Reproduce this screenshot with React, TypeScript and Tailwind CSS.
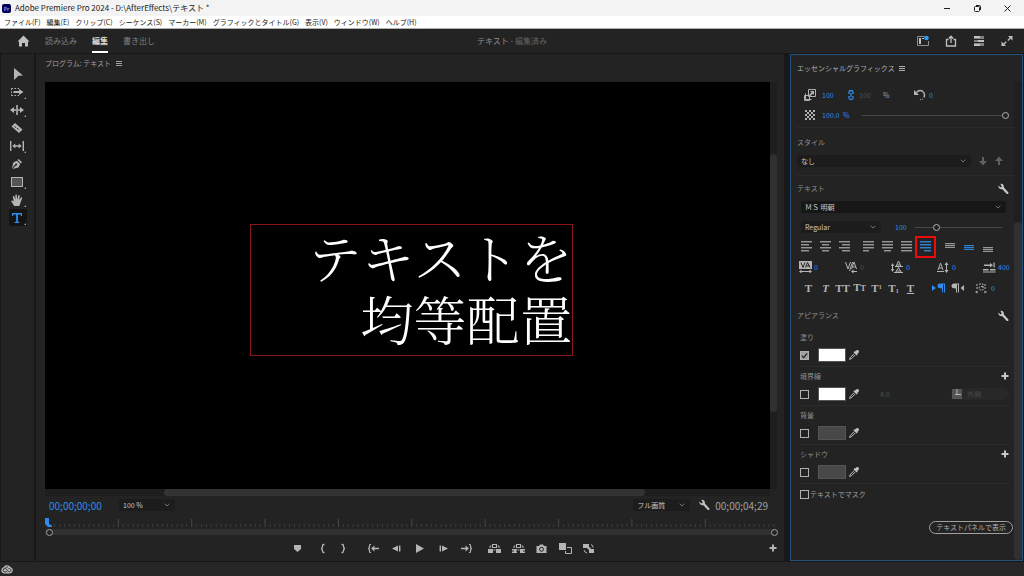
import type { ReactNode } from "react"
import { ChevronDown } from "lucide-react"

const menus = [
  "ファイル(F)",
  "編集(E)",
  "クリップ(C)",
  "シーケンス(S)",
  "マーカー(M)",
  "グラフィックとタイトル(G)",
  "表示(V)",
  "ウィンドウ(W)",
  "ヘルプ(H)",
]

type IconProps = { w?: number; h?: number; children: ReactNode; className?: string }

function Icon({ w = 12, h = 12, children, className = "" }: IconProps) {
  return (
    <svg
      width={w}
      height={h}
      viewBox={`0 0 ${w} ${h}`}
      fill="currentColor"
      className={`block shrink-0 ${className}`}
      aria-hidden="true"
    >
      {children}
    </svg>
  )
}

function Wrench() {
  return (
    <Icon>
      <path d="M1.2 2.6 3.6 4.4 4.8 3.4 3.4.9C5.6.4 7.2 2 6.9 4.4L11.4 9.4Q11.8 10.2 11.2 10.8 10.6 11.3 9.8 10.9L5.4 6.2C3.2 6.8 1.2 5 1.2 2.6Z" />
    </Icon>
  )
}

function Plus() {
  return (
    <Icon w={8} h={8}>
      <path d="M3 .5h2V3h2.5v2H5v2.5H3V5H.5V3H3z" />
    </Icon>
  )
}

function Burger() {
  return (
    <Icon w={6} h={6}>
      <path d="M0 0h6v1H0zM0 2h6v1H0zM0 4h6v1H0z" />
    </Icon>
  )
}

function Dropper() {
  return (
    <Icon>
      <path d="M8 1.6Q9.4.3 10.6 1.4 11.7 2.6 10.4 4L9.2 5.1 9.7 5.7 8.8 6.6 5.4 3.2 6.3 2.3 6.9 2.8z" />
      <path d="M6.2 4.6 2.4 8.4 1.6 10.4 3.6 9.6 7.4 5.8" fill="none" stroke="currentColor" />
    </Icon>
  )
}

function Lines({ rows }: { rows: [number, number][] }) {
  return (
    <Icon w={11} h={12}>
      {rows.map(([x, w], i) => (
        <rect key={i} x={x} y={i * 3} width={w} height={1} />
      ))}
      {rows.map(([x, w], i) => (
        <rect key={`s${i}`} x={x} y={i * 3 + 1} width={w} height={1} opacity={0.45} />
      ))}
    </Icon>
  )
}

function VLines({ top }: { top: number }) {
  return (
    <Icon w={11} h={12}>
      <path d={`M1 ${top}h10v1H1zM1 ${top + 2}h10v1H1zM1 ${top + 4}h10v1H1z`} />
      <path d={`M1 ${top}h10v5H1z`} opacity={0.25} />
    </Icon>
  )
}

const tools: { label: string; corner?: boolean; active?: boolean; icon: ReactNode }[] = [
  { label: "選択ツール", icon: <path d="M4 1 13 8.500 8.500 8.800 4 13z" /> },
  {
    label: "トラックの前方選択ツール",
    corner: true,
    icon: (
      <>
        <path d="M1.5 3.5h8M1.5 10.5h8M1.5 3.5v7" stroke="currentColor" strokeDasharray="1.5 1.5" fill="none" />
        <path d="M3.5 6H9V4L13.5 7 9 10V8H3.5z" />
      </>
    ),
  },
  {
    label: "リップルツール",
    corner: true,
    icon: <path d="M6.2 2h1.6v10H6.2zM0 7l4-3v2.2h2v1.6H4V10zM14 7l-4-3v2.2H8v1.6h2V10z" />,
  },
  {
    label: "レーザーツール",
    icon: (
      <>
        <path d="M5 2 12.5 8.5 9 12 1.5 5.5z" />
        <path d="M4.5 5.5 9.5 9" stroke="#232323" strokeDasharray="2 1" />
      </>
    ),
  },
  {
    label: "スリップツール",
    corner: true,
    icon: <path d="M0 2h1.4v10H0zM12.6 2H14v10h-1.4zM2.3 7l3-2.5v1.8h3.4V4.500l3 2.500-3 2.500V7.700H5.3v1.8z" />,
  },
  {
    label: "ペンツール",
    icon: <path d="M8.6 2 12 5.2 10.8 6.4 7.5 3zM6.8 3.8 10.2 7 8.4 10.6 2.4 12 6 8.4A1 1 0 1 0 5.2 7.6L1.8 11.4 3.4 5.4z" />,
  },
  {
    label: "長方形ツール",
    corner: true,
    icon: <rect x="1.5" y="2.5" width="11" height="9" fill="#555" stroke="currentColor" />,
  },
  {
    label: "手のひらツール",
    corner: true,
    icon: (
      <path d="M4.2 13 1.2 8.2Q1.4 7.2 2.6 7.6L3.8 8.6 2.8 3.4Q3.4 2.4 4.2 3.2L5.4 6.6 5.4 1.8Q6.2 1 6.8 1.8L7.2 6.4 8.4 2.2Q9.2 1.5 9.8 2.4L9.2 7 11 4.4Q12 4 12.2 5L10.2 10.6 9.4 13z" />
    ),
  },
  {
    label: "横書き文字ツール",
    corner: true,
    active: true,
    icon: <path d="M2 2h10v3h-1L10.6 3.4H7.9V10.8L9.4 11v1H4.6v-1L6.1 10.8V3.4H3.4L3 5H2z" />,
  },
]

function Toolbar() {
  return (
    <aside className="flex w-9 shrink-0 flex-col items-center gap-px border-r-2 border-l border-[#181818] bg-[#232323] pt-[11px]">
      {tools.map((t) => (
        <button
          key={t.label}
          aria-label={t.label}
          className={`flex h-[17px] w-[18px] items-center justify-center ${t.active ? "bg-[#141414] text-[#2d8ceb]" : "text-[#b4b4b4]"}`}
        >
          <Icon w={16} h={14}>
            {t.icon}
            {t.corner && <path d="M16 12v2h-2z" fill="#a0a0a0" />}
          </Icon>
        </button>
      ))}
    </aside>
  )
}

const transport: { label: string; gap: string; icon: ReactNode }[] = [
  { label: "マーカーを追加", gap: "", icon: <path d="M3 3h7v4L6.5 10 3 7z" /> },
  {
    label: "インをマーク",
    gap: "ml-[5px]",
    icon: <path d="M8.500 2.500H7.500Q6.500 2.500 6.500 4 6.500 6.500 5 6.500 6.500 6.500 6.500 9 6.500 10.500 7.500 10.500H8.500" fill="none" stroke="currentColor" strokeWidth="1.3" />,
  },
  {
    label: "アウトをマーク",
    gap: "ml-px",
    icon: <path d="M4.500 2.500H5.500Q6.500 2.500 6.500 4 6.500 6.500 8 6.500 6.500 6.500 6.500 9 6.500 10.500 5.500 10.500H4.500" fill="none" stroke="currentColor" strokeWidth="1.3" />,
  },
  {
    label: "インへ移動",
    gap: "ml-[10px]",
    icon: (
      <>
        <path d="M4 2.500H3Q2.500 2.500 2.500 4 2.500 6.500 1 6.500 2.500 6.500 2.500 9 2.500 10.500 3 10.500H4" fill="none" stroke="currentColor" strokeWidth="1.2" />
        <path d="M4 6.500 7.500 3.500v2.200H12v1.600H7.500v2.200z" />
      </>
    ),
  },
  { label: "1 フレーム前へ戻る", gap: "ml-[3px]", icon: <path d="M2 6.500 8 3.500v6zM9 3.500h1.400v6H9z" /> },
  { label: "再生", gap: "ml-[3px]", icon: <path d="M3 2 11 6.500 3 11z" /> },
  { label: "1 フレーム先へ進む", gap: "ml-1", icon: <path d="M11 6.500 5 3.500v6zM2.600 3.500H4v6H2.600z" /> },
  {
    label: "アウトへ移動",
    gap: "ml-[3px]",
    icon: (
      <>
        <path d="M9 2.500h1Q10.500 2.500 10.500 4 10.500 6.500 12 6.500 10.500 6.500 10.500 9 10.500 10.500 10 10.500H9" fill="none" stroke="currentColor" strokeWidth="1.2" />
        <path d="M9 6.500 5.500 3.500v2.200H1v1.600h4.500v2.200z" />
      </>
    ),
  },
  {
    label: "リフト",
    gap: "ml-2",
    icon: (
      <>
        <rect x="0" y="7" width="5" height="4" />
        <rect x="8" y="7" width="5" height="4" />
        <rect x="4.5" y="2.5" width="4" height="3" fill="none" stroke="currentColor" />
        <path d="M2 6V4h1.500M11 6V4H9.500M5.500 8h2" fill="none" stroke="currentColor" />
      </>
    ),
  },
  {
    label: "抽出",
    gap: "ml-1",
    icon: (
      <>
        <path d="M0 7h5v1L4 9l1 1v1H0V9.500h2v-1H0zM13 7H8v4h5V9.500h-2v-1h2z" />
        <rect x="4.5" y="2.5" width="4" height="3" fill="none" stroke="currentColor" />
        <path d="M2 6V4h1.500M11 6V4H9.500M5.500 8h2" fill="none" stroke="currentColor" />
      </>
    ),
  },
  {
    label: "フレームを書き出し",
    gap: "ml-[3px]",
    icon: (
      <>
        <path d="M1.500 4H4l1-1.500h3L9 4h2.500v7h-10z" />
        <circle cx="6.5" cy="7.3" r="2" fill="none" stroke="#232323" />
      </>
    ),
  },
  {
    label: "比較表示",
    gap: "ml-1",
    icon: (
      <>
        <rect x="0" y="1" width="7" height="7" />
        <path d="M8 5.500h4.500v6h-6V9" fill="none" stroke="currentColor" />
      </>
    ),
  },
  {
    label: "プロキシの切り替え",
    gap: "ml-[3px]",
    icon: (
      <>
        <rect x="1" y="2" width="6" height="4" />
        <rect x="7" y="7" width="5" height="4" />
        <path d="M9 2.500q2 .5 2 3M2 8q.5 2.500 3 3" fill="none" stroke="currentColor" />
        <path d="M5 6.500 8.500 9V5z" />
      </>
    ),
  },
]

function Transport() {
  return (
    <div className="flex h-6 items-center pl-[242px] text-[#b4b4b4]">
      {transport.map((t) => (
        <button key={t.label} aria-label={t.label} className={`flex w-5 shrink-0 justify-center ${t.gap}`}>
          <Icon w={13} h={13}>{t.icon}</Icon>
        </button>
      ))}
      <button aria-label="ボタンエディター" className="ml-auto">
        <Plus />
      </button>
    </div>
  )
}

type SelectProps = { label: string; value: string; className?: string; selectClass?: string }

function Select({ label, value, className = "", selectClass = "bg-[#1c1c1c]" }: SelectProps) {
  return (
    <div className={`relative flex items-center ${className}`}>
      <select
        aria-label={label}
        className={`h-3 w-full appearance-none rounded-xs pr-3 pl-1 text-[7px] leading-3 text-[#c8c8c8] ${selectClass}`}
      >
        <option>{value}</option>
      </select>
      <ChevronDown size={8} className="pointer-events-none absolute right-1 text-[#a0a0a0]" />
    </div>
  )
}

function Ruler() {
  const ticks = Array.from({ length: 149 }, (_, i) => i + 1)
  return (
    <div className="relative mr-[2px] h-[19px]">
      <svg width="100%" height="12" className="block" aria-hidden="true">
        {ticks.map((i) => {
          const x = `${i * 0.67}%`
          const major = i % 15 === 0
          return (
            <line key={i} x1={x} x2={x} y1={major ? 2 : 7} y2={10} stroke={major ? "#484848" : "#3c3c3c"} />
          )
        })}
      </svg>
      <div className="h-[6px] bg-[#303030]" />
      <div className="absolute top-px left-0 text-[#2d8ceb]">
        <Icon w={8} h={9}>
          <path d="M0 0h4v6l3 1.500v1.500H3L0 6z" />
        </Icon>
      </div>
      <div className="absolute bottom-0 left-px size-[7px] rounded-full border border-[#a0a0a0] bg-[#232323]" />
      <div className="absolute -right-[3px] bottom-0 size-[7px] rounded-full border border-[#a0a0a0] bg-[#232323]" />
    </div>
  )
}

function ProgramPanel() {
  return (
    <main className="flex min-w-0 flex-1 flex-col bg-[#232323] pr-[7px] pl-[9px]">
      <div className="flex h-[19px] items-center gap-[5px] text-[7px] text-[#a0a0a0]">
        <h2>プログラム: テキスト</h2>
        <Burger />
      </div>

      <div className="mt-[9px] flex flex-1">
        <div className="flex flex-1 items-center justify-center bg-black pt-2 pl-2">
          <div className="border border-[#8c1518] pb-[6px] pl-[58px] text-right font-['Noto_Serif_CJK_JP','Noto_Sans_CJK_JP',serif] text-[53px] leading-[62px] font-light text-white">
            <p>テキストを</p>
            <p>均等配置</p>
          </div>
        </div>
        <div className="flex w-[7px] flex-col bg-[#1e1e1e] pt-[72px] pb-[77px]">
          <div className="flex-1 rounded bg-[#303030]" />
        </div>
      </div>
      <div className="mr-[7px] h-[7px] bg-[#1e1e1e] pr-[125px] pl-[119px]">
        <div className="h-full rounded bg-[#333]" />
      </div>

      <div className="mb-[3px] flex h-[18px] items-center pr-[9px] pl-1">
        <span className="w-[70px] text-[10px] text-[#2d8ceb]">00;00;00;00</span>
        <Select label="ズームレベルを選択" value="100 %" className="w-[56px]" />
        <Select label="再生時の解像度" value="フル画質" className="mr-2 ml-auto w-[57px]" />
        <button aria-label="設定" className="mr-[5px] text-[#c0c0c0]">
          <Wrench />
        </button>
        <span className="text-[10px] text-[#a0a0a0]">00;00;04;29</span>
      </div>

      <Ruler />
      <Transport />
      <div className="h-px" />
    </main>
  )
}

type NumProps = { label: string; value: string; className?: string }

function Num({ label, value, className = "w-6 text-[#2d8ceb]" }: NumProps) {
  return <input aria-label={label} defaultValue={value} className={`shrink-0 bg-transparent text-[7px] leading-3 ${className}`} />
}

type SliderProps = { label: string; value: number }

function Slider({ label, value }: SliderProps) {
  return (
    <input
      type="range"
      aria-label={label}
      defaultValue={value}
      className="h-[7px] min-w-0 flex-1 appearance-none bg-transparent [&::-webkit-slider-runnable-track]:h-[7px] [&::-webkit-slider-runnable-track]:bg-[linear-gradient(#484848,#484848)] [&::-webkit-slider-runnable-track]:bg-[length:100%_1px] [&::-webkit-slider-runnable-track]:bg-center [&::-webkit-slider-runnable-track]:bg-no-repeat [&::-webkit-slider-thumb]:size-[7px] [&::-webkit-slider-thumb]:appearance-none [&::-webkit-slider-thumb]:rounded-full [&::-webkit-slider-thumb]:border [&::-webkit-slider-thumb]:border-[#b4b4b4] [&::-webkit-slider-thumb]:bg-[#232323]"
    />
  )
}

const alignGroups: { label: string; blue?: boolean; marked?: boolean; icon: ReactNode }[][] = [
  [
    { label: "左揃え", icon: <Lines rows={[[0, 11], [0, 8], [0, 11], [0, 8]]} /> },
    { label: "中央揃え", icon: <Lines rows={[[0, 11], [2, 7], [0, 11], [2, 7]]} /> },
    { label: "右揃え", icon: <Lines rows={[[0, 11], [3, 8], [0, 11], [3, 8]]} /> },
  ],
  [
    { label: "均等配置 (最終行左揃え)", icon: <Lines rows={[[0, 11], [0, 11], [0, 11], [0, 6]]} /> },
    { label: "均等配置 (最終行中央揃え)", icon: <Lines rows={[[0, 11], [0, 11], [0, 11], [2, 7]]} /> },
    { label: "両端揃え", icon: <Lines rows={[[0, 11], [0, 11], [0, 11], [0, 11]]} /> },
    { label: "均等配置 (最終行右揃え)", blue: true, marked: true, icon: <Lines rows={[[0, 11], [0, 11], [0, 11], [4, 7]]} /> },
  ],
  [
    { label: "テキストを上揃え", icon: <VLines top={2} /> },
    { label: "テキストを垂直方向に中央揃え", blue: true, icon: <VLines top={4} /> },
    { label: "テキストを下揃え", icon: <VLines top={6} /> },
  ],
]

const spacing: { label: string; value: string; dim?: boolean; icon: ReactNode }[] = [
  {
    label: "トラッキング",
    value: "0",
    icon: (
      <>
        <rect width="13" height="8" />
        <path d="M2 1.500 4 6.500 6 1.500M6.500 6.500 8.500 1.500 11 6.500M7.500 5h3" fill="none" stroke="#232323" />
        <path d="M0 10.500 2.500 8.500v1.500h8V8.500l2.500 2-2.500 2V11h-8v1.500z" />
      </>
    ),
  },
  {
    label: "カーニング",
    value: "0",
    dim: true,
    icon: (
      <>
        <path d="M.5 1 3 8 5.500 1M7.500 1 4.500 10M6.500 8 9 1 11.500 8M7.500 6h3" fill="none" stroke="currentColor" />
        <path d="M6 10.500 8.500 8.500V10H12v1H8.500v1.500z" />
      </>
    ),
  },
  {
    label: "行間",
    value: "0",
    icon: (
      <>
        <path d="M5 5.500 7.500 0 10 5.500M6 4h3M4.500 11.500 7.500 6.500 10.500 11.500M5.500 10h4M4 5.500h8M3 11.500h9M1.500 3v7" fill="none" stroke="currentColor" />
        <path d="M1.500 2 3.200 5H0zM1.500 11 3.200 8H0z" />
      </>
    ),
  },
  {
    label: "ベースラインシフト",
    value: "0",
    icon: (
      <>
        <path d="M1 9 3.500 2 6 9M2 7h3M0 10.500h7M9.500 3v7" fill="none" stroke="currentColor" />
        <path d="M9.500 1 11.500 4H7.500zM9.500 12 11.500 9H7.500z" />
      </>
    ),
  },
  {
    label: "タブの幅",
    value: "400",
    icon: <path d="M1 3.500h6V2l3 2.200L7 6.500V5H1zM10.500 1.500h1.200v5h-1.200zM0 8h5.500v1.500H0zM7 8h5.500v1.500H7zM0 10.500h12.500v1H0z" />,
  },
]

const typeStyles: { label: string; glyph: ReactNode; className?: string }[] = [
  { label: "太字", glyph: "T" },
  { label: "斜体", glyph: "T", className: "italic" },
  { label: "オールキャップス", glyph: "TT" },
  { label: "スモールキャップス", glyph: <>T<span className="text-[8px]">T</span></> },
  { label: "上付き文字", glyph: <>T<sup className="text-[6px]">1</sup></> },
  { label: "下付き文字", glyph: <>T<sub className="text-[6px]">1</sub></> },
  { label: "下線", glyph: "T", className: "underline" },
]

type PaintProps = { title: string; on?: boolean; swatch: string; add?: boolean; children?: ReactNode }

function CheckBox({ label, checked }: { label: string; checked?: boolean }) {
  return (
    <span className="relative flex size-[9px] shrink-0">
      <input
        type="checkbox"
        aria-label={label}
        defaultChecked={checked}
        className="size-[9px] appearance-none border border-[#b0b0b0] checked:bg-[#a0a0a0]"
      />
      {checked && (
        <svg viewBox="0 0 9 9" className="pointer-events-none absolute inset-0" fill="none" stroke="#232323" aria-hidden="true">
          <path d="M1.8 4.6 3.7 6.6 7.2 2.4" strokeWidth="1.3" />
        </svg>
      )}
    </span>
  )
}

function Paint({ title, on, swatch, add, children }: PaintProps) {
  return (
    <section className="mr-[5px] ml-[3px] h-[39px] border-b border-[#2b2b2b]">
      <div className="flex h-[18px] items-center justify-between">
        <h4>{title}</h4>
        {add && (
          <button aria-label={`${title}を追加`} className="text-[#c8c8c8]">
            <Plus />
          </button>
        )}
      </div>
      <div className="flex h-[18px] items-center">
        <CheckBox label={title} checked={on} />
        <button aria-label={`${title}のカラー`} className={`ml-[9px] h-[14px] w-7 border border-[#555] ${swatch}`} />
        <button aria-label="スポイト" className="ml-[2px] text-[#c0c0c0]">
          <Dropper />
        </button>
        {children}
      </div>
    </section>
  )
}

function GraphicsPanel() {
  return (
    <aside className="flex w-[233px] shrink-0 flex-col border border-[#25527c] bg-[#232323] text-[7px] text-[#909090]">
      <div className="flex h-[27px] items-center gap-1 pl-[6px] text-[#b0b0b0]">
        <h2>エッセンシャルグラフィックス</h2>
        <Burger />
      </div>

      <div className="flex flex-1">
        <div className="flex min-w-0 flex-1 flex-col pt-[3px] pl-[6px]">
          <div className="flex h-5 items-center pl-[7px]">
            <Icon className="text-[#b0b0b0]">
              <path d="M4.500.5h7v7h-7zM1.500 4.500v6h6M.5 6.500h5v5h-5z" fill="none" stroke="currentColor" />
              <path d="M6 2h4v4L8.800 4.800 6 7.500 4.800 6.300 7.500 3.500z" />
            </Icon>
            <Num label="スケール" value="100" className="ml-[6px] w-6 text-[#2d8ceb]" />
            <button aria-label="縦横比を固定" className="text-[#2d8ceb]">
              <Icon w={10} h={12}>
                <path d="M3 5V3Q3 1.500 5 1.500T7 3V5M3 7v2Q3 10.500 5 10.500T7 9V7M5 4v4" fill="none" stroke="currentColor" strokeWidth="1.3" />
              </Icon>
            </button>
            <Num label="スケール (幅)" value="100" className="ml-[3px] w-6 text-[#505050]" />
            <span className="w-[31px] text-[#a0a0a0]">%</span>
            <button aria-label="回転をリセット" className="text-[#b4b4b4]">
              <Icon>
                <path d="M2.500 3.500Q5 .5 8.500 2.200 11.500 4.500 10 8.500" fill="none" stroke="currentColor" strokeWidth="1.4" />
                <path d="M0 1v5h5z" />
                <path d="M9 10 5 11" stroke="currentColor" strokeDasharray="1 1" />
              </Icon>
            </button>
            <Num label="回転" value="0" className="ml-[3px] w-6 text-[#2d8ceb]" />
          </div>

          <div className="mb-[2px] flex h-5 items-center pr-[5px] pl-[7px]">
            <Icon className="text-[#b0b0b0]">
              {[0, 1, 2, 3, 4].map((r) =>
                [0, 1, 2, 3, 4].map((c) => (r + c) % 2 === 0 && <rect key={`${r}${c}`} x={1 + c * 2} y={1 + r * 2} width="2" height="2" />),
              )}
            </Icon>
            <Num label="不透明度" value="100.0" className="ml-[6px] w-[21px] text-[#2d8ceb]" />
            <span className="w-[19px] text-[#2d8ceb]">%</span>
            <Slider label="不透明度スライダー" value={100} />
          </div>

          <section className="border-t border-[#2b2b2b] py-2">
            <h3 className="h-3 leading-3">スタイル</h3>
            <div className="mt-[7px] flex items-center">
              <Select label="スタイル" value="なし" className="mr-1 w-[174px]" />
              <button aria-label="スタイルをプル" className="text-[#606060]">
                <Icon w={16}>
                  <path d="M7 2h2v4h3L8 10.500 4 6h3z" />
                </Icon>
              </button>
              <button aria-label="スタイルをプッシュ" className="text-[#606060]">
                <Icon w={16}>
                  <path d="M7 10h2V6h3L8 1.500 4 6h3z" />
                </Icon>
              </button>
            </div>
          </section>

          <section className="border-t border-[#2b2b2b]">
            <div className="flex h-[25px] items-center justify-between pr-[5px]">
              <h3>テキスト</h3>
              <button aria-label="テキスト設定" className="text-[#c8c8c8]">
                <Wrench />
              </button>
            </div>

            <Select label="フォント" value="ＭＳ 明朝" className="mr-2 ml-1" selectClass="bg-[#171717]" />

            <div className="mt-[6px] flex h-4 items-center pr-3 pl-1">
              <Select label="フォントスタイル" value="Regular" className="w-[80px]" />
              <Num label="フォントサイズ" value="100" className="ml-[14px] w-5 text-[#2d8ceb]" />
              <Slider label="フォントサイズスライダー" value={23} />
            </div>

            <div className="mt-[2px] flex h-5 gap-[5px]">
              {alignGroups.map((group, g) => (
                <div key={g} className="flex">
                  {group.map((a) => (
                    <button
                      key={a.label}
                      aria-label={a.label}
                      className={`flex w-[19px] items-center justify-center ${a.blue ? "text-[#2d80d0]" : "text-[#969696]"} ${a.marked ? "outline-2 -outline-offset-1 outline-[#ec0c0c]" : ""}`}
                    >
                      {a.icon}
                    </button>
                  ))}
                </div>
              ))}
            </div>

            <div className="flex h-5 items-center pl-[2px]">
              {spacing.map((s) => (
                <label key={s.label} className="flex w-[46px] items-center gap-[2px] text-[#b4b4b4] last:w-[30px]">
                  <Icon w={13} h={13}>{s.icon}</Icon>
                  <Num label={s.label} value={s.value} className={s.dim ? "w-4 text-[#505050]" : "w-4 text-[#2d8ceb]"} />
                </label>
              ))}
            </div>

            <div className="flex h-[21px] items-center pl-[3px] text-[#b4b4b4]">
              {typeStyles.map((t) => (
                <button
                  key={t.label}
                  aria-label={t.label}
                  className={`w-[17px] text-center font-['Liberation_Serif',serif] text-[11px] leading-4 font-bold whitespace-nowrap ${t.className ?? ""}`}
                >
                  {t.glyph}
                </button>
              ))}
              <button aria-label="左から右に入力" className="ml-3 text-[#2d8ceb]">
                <Icon w={18}>
                  <path d="M1 3 5 6 1 9zM9 1.500h5v9h-1v-8h-1v8h-1V6.500Q6.500 6.500 6.500 4T9 1.500z" />
                </Icon>
              </button>
              <button aria-label="右から左に入力">
                <Icon w={18}>
                  <path d="M5 1.500h5v9H9v-8H8v8H7V6.500Q2.500 6.500 2.500 4T5 1.500zM15 3 11.500 6 15 9z" />
                </Icon>
              </button>
              <label className="ml-2 flex items-center gap-1">
                <Icon>
                  <path d="M4 2h4v6M8 4.500H5.500Q4 4.500 4 6t1.500 2H8M2 2v6M10 2v6" fill="none" stroke="currentColor" strokeDasharray="2 1" />
                  <path d="M0 10 2.500 8.500v3zM12 10 9.500 8.500v3z" />
                </Icon>
                <Num label="文字ツメ" value="0" className="w-4 text-[#2d8ceb]" />
              </label>
            </div>
          </section>

          <section className="pt-[5px]">
            <div className="flex h-[25px] items-center justify-between pr-[5px]">
              <h3>アピアランス</h3>
              <button aria-label="アピアランス設定" className="text-[#c8c8c8]">
                <Wrench />
              </button>
            </div>
            <Paint title="塗り" on swatch="bg-white" />
            <Paint title="境界線" swatch="bg-white" add>
              <Num label="境界線の幅" value="4.0" className="ml-5 w-6 text-[#505050]" />
              <button className="ml-auto flex h-3 w-[58px] items-center gap-1 rounded-full bg-[#282828] text-[#484848]">
                <Icon h={10} className="text-[#555]">
                  <path d="M1 0h10v10H1z" />
                  <path d="M6 0v5M4 5.500h6" stroke="#b4b4b4" />
                </Icon>
                外側
              </button>
            </Paint>
            <Paint title="背景" swatch="bg-[#484848]" />
            <Paint title="シャドウ" swatch="bg-[#484848]" add />
            <label className="ml-[3px] flex h-5 items-center gap-px text-[#a0a0a0]">
              <CheckBox label="テキストでマスク" />
              テキストでマスク
            </label>
          </section>

          <div className="mt-auto flex justify-end pr-px pb-[26px]">
            <button className="h-[13px] rounded-full border border-[#a0a0a0] px-[6px] leading-[11px] text-[#b0b0b0]">
              テキストパネルで表示
            </button>
          </div>
        </div>

        <div className="flex w-2 flex-col bg-[#1f1f1f] pt-[140px]">
          <div className="flex-1 rounded bg-[#303030]" />
        </div>
      </div>
    </aside>
  )
}

export default function App() {
  return (
    <div className="flex min-h-screen flex-col bg-[#181818] font-['Noto_Sans_CJK_JP',sans-serif] select-none">
      <header>
        <div className="flex h-4 items-center bg-[#f3f3f3] pl-[2px] text-[#202020]">
          <span className="flex size-[9px] items-center justify-center rounded-xs bg-[#00005b] text-[5px] leading-none font-bold text-[#9999ff]">
            Pr
          </span>
          <h1 className="ml-1 text-[8px] leading-4">Adobe Premiere Pro 2024 - D:\AfterEffects\テキスト *</h1>
          <div className="ml-auto flex gap-[21px] pr-3">
            <button aria-label="最小化">
              <Icon w={9} h={9}>
                <path d="M1 4h6v1H1z" />
              </Icon>
            </button>
            <button aria-label="元に戻す">
              <Icon w={9} h={9}>
                <path d="M1.500 3.500Q1.500 2.500 2.500 2.500H5.500Q6.500 2.500 6.500 3.500V6.500Q6.500 7.500 5.500 7.500H2.500Q1.500 7.500 1.500 6.500zM3 1.500h3.500q1 0 1 1V6" fill="none" stroke="currentColor" />
              </Icon>
            </button>
            <button aria-label="閉じる">
              <Icon w={9} h={9}>
                <path d="M1.500 1.500 7.500 7.500M7.500 1.500 1.500 7.500" stroke="currentColor" />
              </Icon>
            </button>
          </div>
        </div>
        <nav className="flex h-[13px] items-center gap-[6px] border-b border-[#b0b0b0] bg-white pl-1 text-[7px] leading-3 text-[#202020]">
          {menus.map((m) => (
            <button key={m} className="whitespace-nowrap">{m}</button>
          ))}
        </nav>
      </header>

      <div className="grid h-[25px] grid-cols-3 items-center border-b border-[#181818] bg-[#232323] text-[8px] text-[#808080]">
        <div className="flex h-6 items-center gap-[15px] pl-[17px]">
          <button aria-label="ホーム" className="text-[#c0c0c0]">
            <Icon w={13} h={12}>
              <path d="M6.5.5 12.5 6.5h-1.500V11.5H8V8H5v3.5H2V6.500H.5z" />
            </Icon>
          </button>
          <button>読み込み</button>
          <button className="h-full border-b-2 border-white pt-[2px] font-bold text-[#d8d8d8]">編集</button>
          <button>書き出し</button>
        </div>
        <p className="text-center">
          <span className="text-[#909090]">テキスト</span> - <span className="text-[#646464]">編集済み</span>
        </p>
        <div className="flex justify-end gap-4 pr-[11px] text-[#c0c0c0]">
          <button aria-label="ワークスペース">
            <Icon>
              <path d="M.5 1.500h7M.5 1.500v9h11V6" fill="none" stroke="#909090" />
              <path d="M2 3h2v6H2zM5 3h2v1H5z" />
              <circle cx="9.5" cy="3" r="2.3" fill="#2d9cf5" />
            </Icon>
          </button>
          <button aria-label="クイック書き出し">
            <Icon>
              <path d="M3.500 4.500h-2v6.500h9V4.500h-2M6 8V2M3.800 3.500 6 1.200l2.200 2.300" fill="none" stroke="currentColor" strokeWidth="1.3" />
            </Icon>
          </button>
          <button aria-label="進行状況">
            <Icon>
              <path d="M1 1h10v3H1zM1 5h10v2H1zM1 8h10v3H1z" fill="#808080" />
              <path d="M1 1h6v2H1zM5 5h6v2H5zM1 9h6v2H1z" />
            </Icon>
          </button>
          <button aria-label="フルスクリーン">
            <Icon>
              <path d="M7 1h4.500v4.500zM.5 6.500V11H5z" />
              <path d="M9.500 3 6.800 5.500M5.200 6.800 2.500 9.500" stroke="currentColor" strokeWidth="1.3" />
            </Icon>
          </button>
        </div>
      </div>

      <div className="flex flex-1 gap-[6px] pr-px">
        <div className="flex min-w-0 flex-1">
          <Toolbar />
          <ProgramPanel />
        </div>
        <GraphicsPanel />
      </div>

      <footer className="flex h-[15px] items-center border-t border-[#181818] bg-[#262626] pl-px">
        <button aria-label="Creative Cloud" className="text-[#b4b4b4]">
          <Icon h={9}>
            <path d="M4 .5Q8-.5 9.500 2 12 2.800 11.800 5.500 11.200 8.500 8 8.500H3.500Q.2 8.200.2 5.200.4 2.500 3 2 3.200 1 4 .5z" />
            <path d="M6.500 6 4.800 7Q2 7 2 5.200 2 3.500 4 3.500 5 3.500 6.500 5.200 7.500 7 9 6.700 10.300 6 9.800 4.500 9 3 7.500 3.600M4.500 3Q5 1.500 7 2" fill="none" stroke="#262626" strokeWidth=".8" />
          </Icon>
        </button>
      </footer>
    </div>
  )
}
